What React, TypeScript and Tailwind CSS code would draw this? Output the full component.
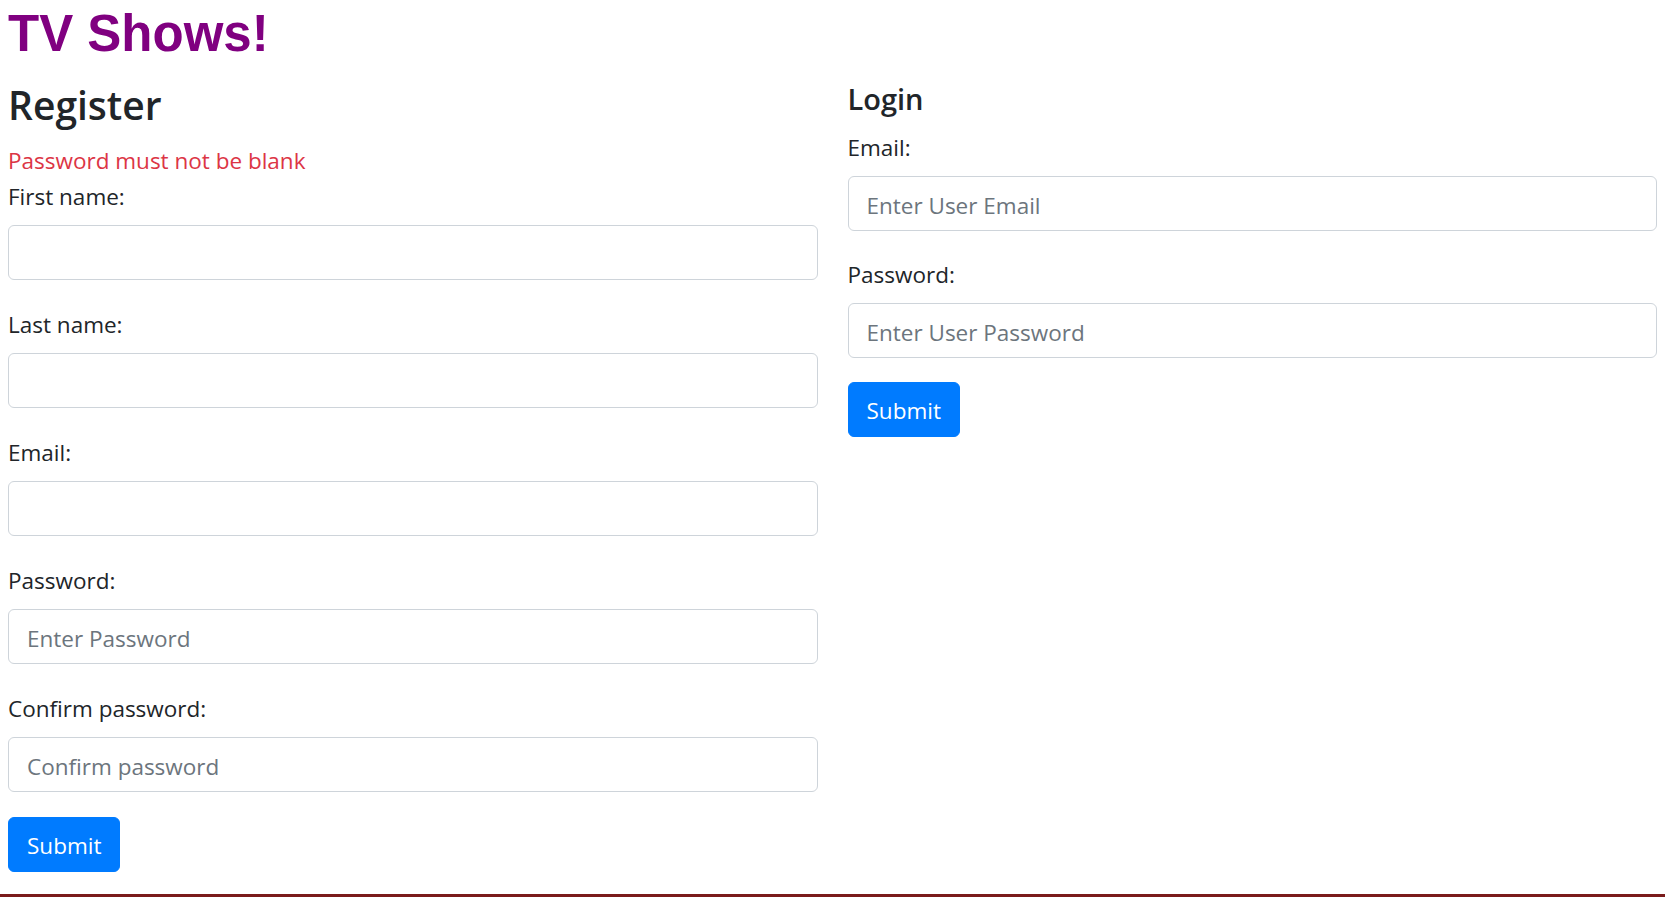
import React from "react";

const font = { fontFamily: '"Open Sans", "Noto Sans", sans-serif' };

function Field({ label, placeholder, type = "text" }: { label: string; placeholder?: string; type?: string }) {
  return (
    <div className="mb-[25px]">
      <label className="mb-[10px] block h-[38px] pt-[2px] text-[22.5px] leading-[36px] text-[#212529]">{label}</label>
      <input
        type={type}
        placeholder={placeholder}
        className="block h-[55px] w-full rounded-[6px] border border-[#ced4da] bg-white px-[18px] pt-[3px] text-[22.5px] text-[#495057] outline-none placeholder:text-[#6c757d]"
      />
    </div>
  );
}

function SubmitButton() {
  return (
    <button className="h-[55px] rounded-[6px] border border-[#007bff] bg-[#007bff] px-[18px] pt-[3px] text-[22.5px] leading-[36px] text-white">
      Submit
    </button>
  );
}

export default function App() {
  return (
    <div className="min-h-[897px] bg-white" style={font}>
      <div className="px-[8px] pt-[4px]">
        <h1
          className="h-[60px] text-[51px] font-bold leading-[60px] text-[#800080]"
          style={{ fontFamily: '"Liberation Sans", Arial, sans-serif' }}
        >
          TV Shows!
        </h1>
      </div>
      <div className="mt-[16px] grid grid-cols-2 gap-x-[30px] px-[8px]">
        <div>
          <h2 className="mt-[2px] mb-[13px] h-[46px] text-[39px] font-semibold leading-[46px] text-[#212529]">Register</h2>
          <div className="h-[36px] pt-[2px] text-[22.5px] leading-[36px] text-[#dc3545]">Password must not be blank</div>
          <Field label="First name:" />
          <Field label="Last name:" />
          <Field label="Email:" />
          <Field label="Password:" placeholder="Enter Password" type="password" />
          <Field label="Confirm password:" placeholder="Confirm password" type="password" />
          <SubmitButton />
        </div>
        <div>
          <h4 className="mt-[1px] mb-[12px] h-[35px] text-[29px] font-semibold leading-[35px] text-[#212529]">Login</h4>
          <Field label="Email:" placeholder="Enter User Email" />
          <div className="-mt-px">
            <Field label="Password:" placeholder="Enter User Password" type="password" />
          </div>
          <div className="-mt-px">
            <SubmitButton />
          </div>
        </div>
      </div>
      <div className="mt-[22px] border-t-[3px] border-[#7a1b1b]" />
    </div>
  );
}
